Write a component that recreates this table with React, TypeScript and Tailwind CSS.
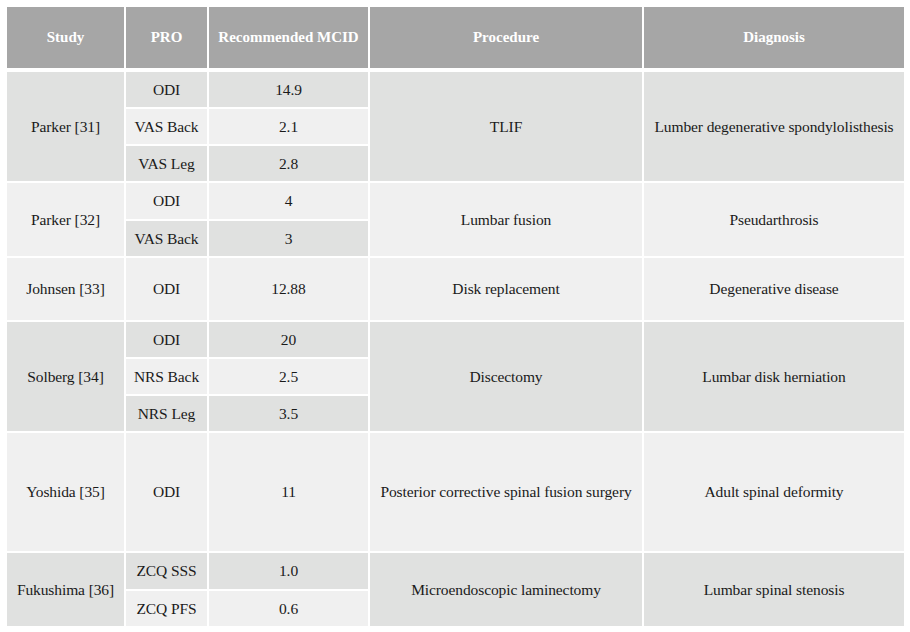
import React from 'react'

const DARK = 'bg-[#e0e1e0]'
const LIGHT = 'bg-[#f0f0f0]'

interface CellProps {
  children: React.ReactNode
  tone: 'd' | 'l'
  span?: 1 | 2 | 3
}

function Cell({ children, tone, span = 1 }: CellProps) {
  const spanCls = span === 3 ? 'row-span-3' : span === 2 ? 'row-span-2' : ''
  return (
    <div
      className={`flex items-center justify-center text-center text-[15.5px] text-[#1a1a1a] leading-none tracking-[-0.1px] ${
        tone === 'd' ? DARK : LIGHT
      } ${spanCls}`}
    >
      {children}
    </div>
  )
}

const headers = ['Study', 'PRO', 'Recommended MCID', 'Procedure', 'Diagnosis']

export default function App() {
  return (
    <div className="w-[910px] h-[632px] bg-white pt-[7px] pl-[7px] font-['Liberation_Serif','Times_New_Roman',serif]">
      <div className="w-[897px]">
        {/* header */}
        <div className="grid grid-cols-[117px_81px_159px_272px_260px] gap-x-[2px] h-[61px]">
          {headers.map((h) => (
            <div
              key={h}
              className="flex items-center justify-center bg-[#a6a6a6] text-white font-bold text-[15px]"
            >
              {h}
            </div>
          ))}
        </div>

        {/* body */}
        <div className="mt-[4px] grid grid-cols-[117px_81px_159px_272px_260px] grid-rows-[35px_35px_35px_36px_35px_62px_35px_35px_35px_118px_36px_35px] gap-[2px]">
          {/* Parker [31] */}
          <Cell tone="d" span={3}>Parker [31]</Cell>
          <Cell tone="d">ODI</Cell>
          <Cell tone="d">14.9</Cell>
          <Cell tone="d" span={3}>TLIF</Cell>
          <Cell tone="d" span={3}>Lumber degenerative spondylolisthesis</Cell>
          <Cell tone="l">VAS Back</Cell>
          <Cell tone="l">2.1</Cell>
          <Cell tone="d">VAS Leg</Cell>
          <Cell tone="d">2.8</Cell>

          {/* Parker [32] */}
          <Cell tone="l" span={2}>Parker [32]</Cell>
          <Cell tone="l">ODI</Cell>
          <Cell tone="l">4</Cell>
          <Cell tone="l" span={2}>Lumbar fusion</Cell>
          <Cell tone="l" span={2}>Pseudarthrosis</Cell>
          <Cell tone="d">VAS Back</Cell>
          <Cell tone="d">3</Cell>

          {/* Johnsen [33] */}
          <Cell tone="l">Johnsen [33]</Cell>
          <Cell tone="l">ODI</Cell>
          <Cell tone="l">12.88</Cell>
          <Cell tone="l">Disk replacement</Cell>
          <Cell tone="l">Degenerative disease</Cell>

          {/* Solberg [34] */}
          <Cell tone="d" span={3}>Solberg [34]</Cell>
          <Cell tone="d">ODI</Cell>
          <Cell tone="d">20</Cell>
          <Cell tone="d" span={3}>Discectomy</Cell>
          <Cell tone="d" span={3}>Lumbar disk herniation</Cell>
          <Cell tone="l">NRS Back</Cell>
          <Cell tone="l">2.5</Cell>
          <Cell tone="d">NRS Leg</Cell>
          <Cell tone="d">3.5</Cell>

          {/* Yoshida [35] */}
          <Cell tone="l">Yoshida [35]</Cell>
          <Cell tone="l">ODI</Cell>
          <Cell tone="l">11</Cell>
          <Cell tone="l">Posterior corrective spinal fusion surgery</Cell>
          <Cell tone="l">Adult spinal deformity</Cell>

          {/* Fukushima [36] */}
          <Cell tone="d" span={2}>Fukushima [36]</Cell>
          <Cell tone="d">ZCQ SSS</Cell>
          <Cell tone="d">1.0</Cell>
          <Cell tone="d" span={2}>Microendoscopic laminectomy</Cell>
          <Cell tone="d" span={2}>Lumbar spinal stenosis</Cell>
          <Cell tone="l">ZCQ PFS</Cell>
          <Cell tone="l">0.6</Cell>
        </div>
      </div>
    </div>
  )
}
